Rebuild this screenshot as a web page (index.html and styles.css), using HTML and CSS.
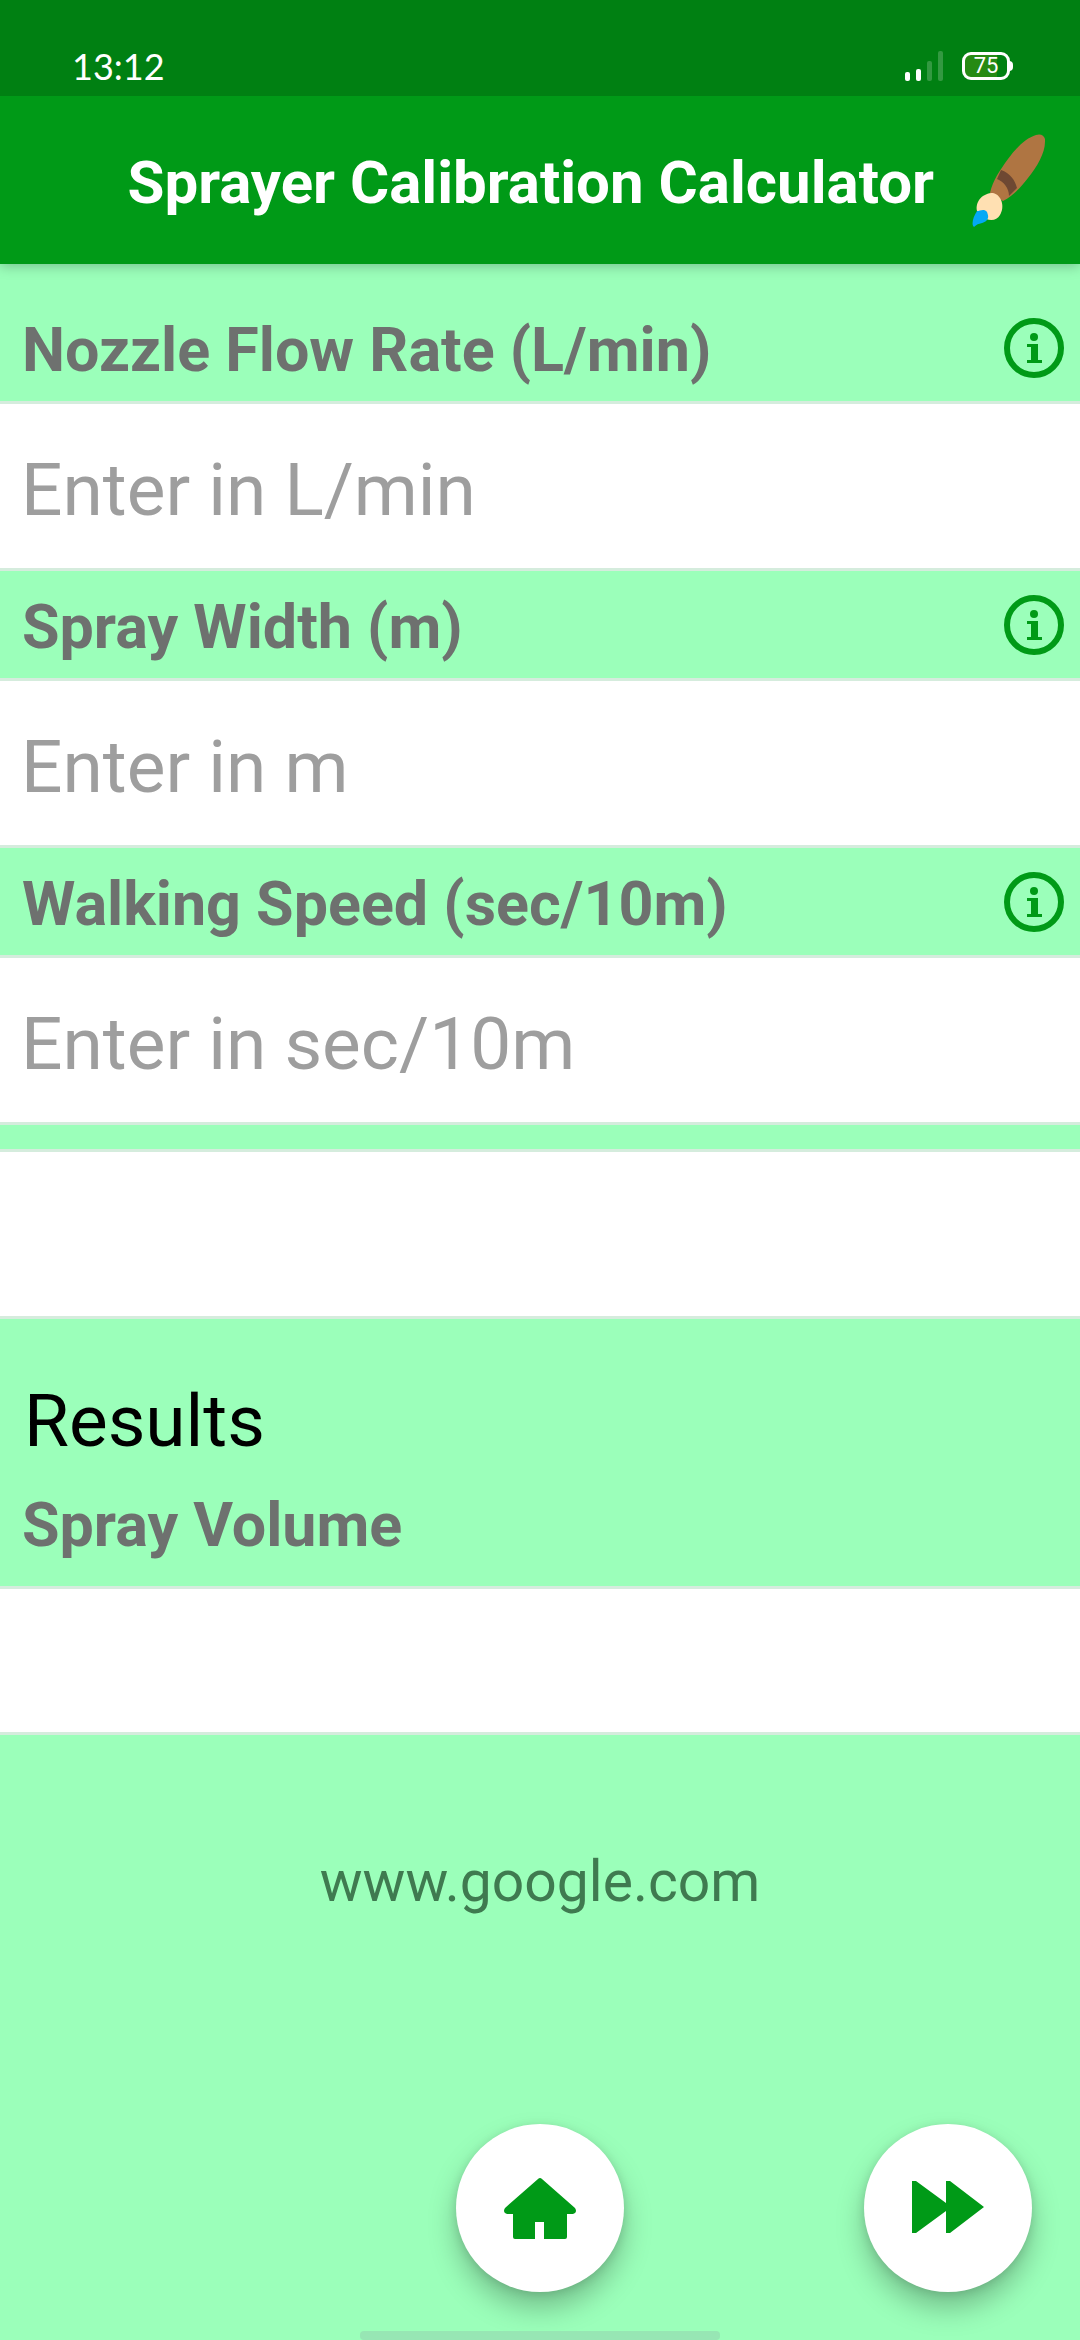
FILE: index.html
```html
<!DOCTYPE html>
<html lang="en">
<head>
<meta charset="utf-8">
<meta name="viewport" content="width=device-width">
<title>Sprayer Calibration Calculator</title>
<link rel="stylesheet" href="styles.css">
</head>
<body>
<div class="status">
  <time class="clock">13:12</time>
  <div class="indicators">
    <svg class="signal" viewBox="0 0 38 30" aria-hidden="true">
      <rect x="0" y="21" width="5" height="9" rx="2" fill="#fff"/>
      <rect x="11" y="18" width="5" height="12" rx="2" fill="#fff"/>
      <rect x="22" y="10" width="5" height="20" rx="2" fill="#fff" fill-opacity=".2"/>
      <rect x="33" y="0" width="5" height="30" rx="2" fill="#fff" fill-opacity=".2"/>
    </svg>
    <span class="battery">75</span>
  </div>
</div>
<header class="appbar">
  <h1 class="title">Sprayer Calibration Calculator</h1>
  <button class="icon-button" type="button" aria-label="Theme">
    <svg class="brush" viewBox="0 0 73 93" aria-hidden="true">
      <path d="M18 59C21 46 28 36 36 25C45 13 54 4 64 1C69-1 74 2 73 8C73 19 65 33 56 44C49 53 41 62 31 67Z" fill="#af7542"/>
      <path d="M29 36C38 39 43 46 45 54L37 62C37 54 32 48 25 45Z" fill="#6e4832"/>
      <path d="M5 77C3 67 11 59 21 59C30 61 33 73 28 81C25 86 20 87 14 85Z" fill="#ffe0b2"/>
      <path d="M5 77C8 77 12 74 15 78C16 81 17 83 15 86C12 90 7 88 2 93C-1 91 1 83 5 77Z" fill="#03a9f4"/>
    </svg>
  </button>
</header>
<main class="content">
  <form class="form">
    <div class="label-row">
      <label for="flow">Nozzle Flow Rate (L/min)</label>
      <button class="icon-button" type="button" aria-label="About nozzle flow rate"><svg class="info" viewBox="0 0 60 60"><use href="#info"/></svg></button>
    </div>
    <input class="field" id="flow" placeholder="Enter in L/min">
    <div class="label-row">
      <label for="width">Spray Width (m)</label>
      <button class="icon-button" type="button" aria-label="About spray width"><svg class="info" viewBox="0 0 60 60"><use href="#info"/></svg></button>
    </div>
    <input class="field" id="width" placeholder="Enter in m">
    <div class="label-row">
      <label for="speed">Walking Speed (sec/10m)</label>
      <button class="icon-button" type="button" aria-label="About walking speed"><svg class="info" viewBox="0 0 60 60"><use href="#info"/></svg></button>
    </div>
    <input class="field" id="speed" placeholder="Enter in sec/10m">
    <input class="field extra" aria-label="Notes">
    <h2 class="results">Results</h2>
    <div class="label-row result-label"><label for="volume">Spray Volume</label></div>
    <input class="field output" id="volume" readonly>
  </form>
  <a class="site" href="#">www.google.com</a>
</main>
<nav class="actions">
  <button class="fab home" type="button" aria-label="Home">
    <svg class="glyph" viewBox="0 0 72 72" aria-hidden="true"><path d="M34 7Q36 5 38 7L71 36Q73 39 71 41L69 42H63V65Q63 67 61 67H40V50H31V67H11Q9 67 9 65V42H3L1 41Q-1 39 1 36Z"/></svg>
  </button>
  <button class="fab next" type="button" aria-label="Next">
    <svg class="glyph" viewBox="0 0 72 72" aria-hidden="true"><path d="M0 9H4L34 31V9H38L72 35L38 61H34V39L4 61H0Z"/></svg>
  </button>
</nav>
<div class="handle"></div>
<svg class="defs" aria-hidden="true">
  <symbol id="info" viewBox="0 0 60 60">
    <circle cx="30" cy="30" r="27" fill="none" stroke="#009a17" stroke-width="6"/>
    <circle cx="30" cy="19" r="4" fill="#009a17"/>
    <path d="M23 26H34V42H38V45H23V42H27V29H23Z" fill="#009a17"/>
  </symbol>
</svg>
</body>
</html>
```

FILE: styles.css
```css
* { box-sizing: border-box; }

body {
  margin: 0;
  min-height: 100vh;
  display: flex;
  flex-direction: column;
  background: #9bffba;
  font-family: Roboto, sans-serif;
}

button { border: 0; padding: 0; background: none; cursor: pointer; }
svg { display: block; }
.defs { display: none; }

.status {
  position: relative;
  z-index: 1;
  display: flex;
  justify-content: space-between;
  height: 96px;
  padding: 44px 67px 0 72px;
  background: #008012;
  color: #fff;
}
.clock { font: 36px/44px Lato, sans-serif; }
.indicators { display: flex; gap: 19px; padding-top: 7px; }
.signal { width: 38px; height: 30px; }
.battery {
  position: relative;
  width: 48px;
  height: 28px;
  margin: 1px 3px 0 0;
  border: 3px solid #fff;
  border-radius: 9px;
  background: linear-gradient(90deg, #268a14 75%, #008012 75%);
  font-size: 22px;
  line-height: 22px;
  text-align: center;
}
.battery::after {
  content: "";
  position: absolute;
  right: -6px;
  top: 6px;
  width: 4px;
  height: 10px;
  border-radius: 0 4px 4px 0;
  background: #fff;
}

.appbar {
  display: flex;
  align-items: center;
  justify-content: flex-end;
  gap: 38px;
  height: 168px;
  padding: 0 35px;
  background: #009a17;
  box-shadow: 0 2px 12px rgba(0, 0, 0, .25);
}
.title { margin: 0; padding-top: 5px; color: #fff; font-size: 60px; line-height: 70px; font-weight: 700; }
.brush { width: 73px; height: 93px; }

.form { display: flex; flex-direction: column; padding-top: 30px; }
.label-row {
  display: flex;
  align-items: center;
  justify-content: space-between;
  height: 107px;
  padding: 0 16px 0 22px;
}
.label-row label { padding-top: 5px; color: #6e716f; font-size: 61px; line-height: 70px; font-weight: 700; }
.info { width: 60px; height: 60px; }
.field {
  width: 100%;
  height: 170px;
  border: solid #d5ecdd;
  border-width: 3px 0;
  border-radius: 0;
  padding: 8px 21px 0;
  background: #fff;
  font: 73px/84px Roboto, sans-serif;
  outline: 0;
}
.field::placeholder { color: #9e9e9e; opacity: 1; }
.extra { margin-top: 24px; }
.results { margin: 60px 24px 0; font-size: 73px; line-height: 84px; font-weight: 400; color: #000; }
.result-label { height: 123px; padding-bottom: 4px; }
.output { height: 149px; }

.site {
  display: block;
  width: fit-content;
  margin: 114px auto 0;
  color: #3f7a50;
  font-size: 57px;
  line-height: 66px;
  text-decoration: none;
}

.actions {
  display: grid;
  grid-template-columns: 1fr auto 1fr;
  margin-top: auto;
  padding: 48px 48px 39px;
}
.fab {
  display: grid;
  place-items: center;
  width: 168px;
  height: 168px;
  border-radius: 50%;
  background: #fff;
  box-shadow: 0 16px 28px rgba(0, 0, 0, .25), 0 2px 10px rgba(0, 0, 0, .12);
}
.home { grid-column: 2; }
.next { grid-column: 3; justify-self: end; }
.glyph { width: 72px; height: 72px; fill: #009a17; }

.handle { width: 33.3%; height: 9px; margin: 0 auto; background: #97e6b4; border-radius: 4px; }
```
